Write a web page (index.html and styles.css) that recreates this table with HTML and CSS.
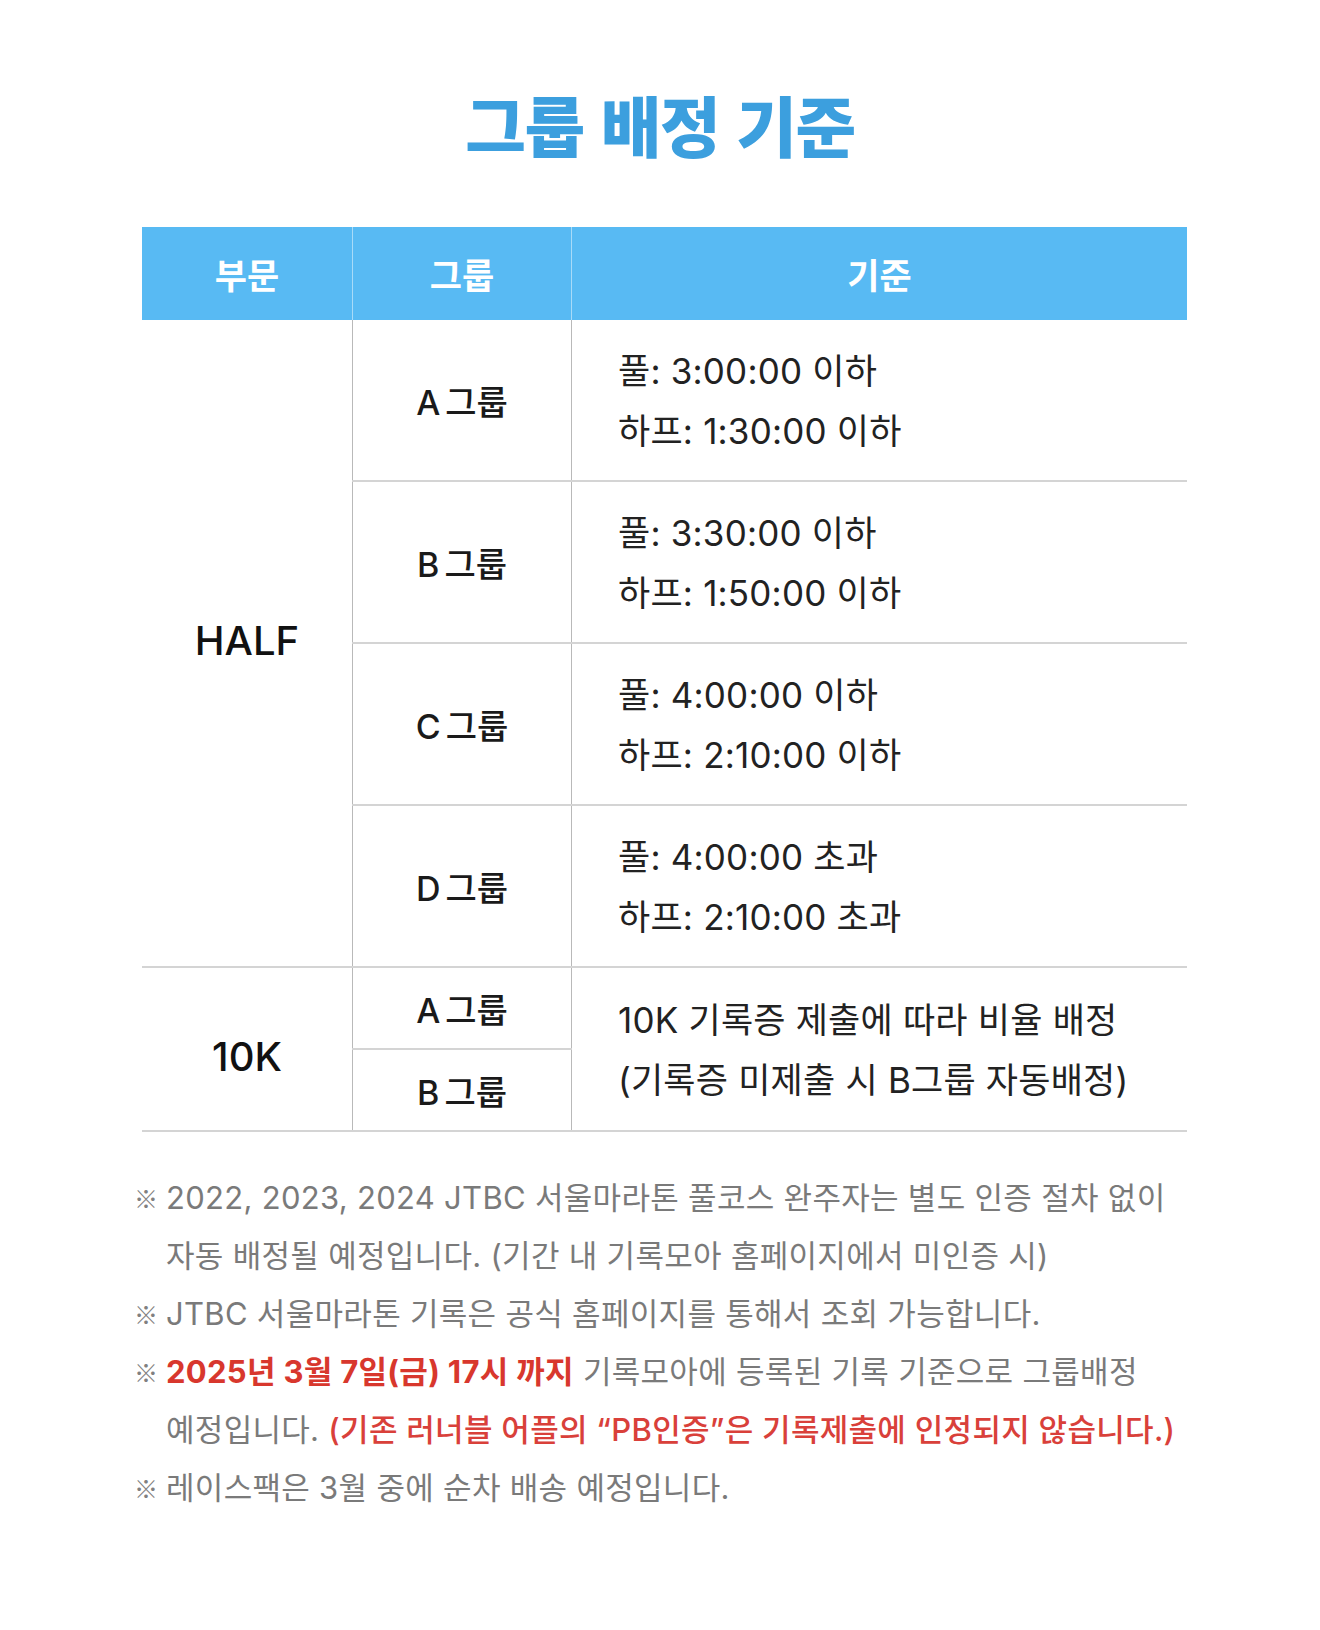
FILE: index.html
```html
<!DOCTYPE html>
<html lang="ko">
<head>
<meta charset="utf-8">
<title>그룹 배정 기준</title>
<link rel="stylesheet" href="styles.css">
</head>
<body>
<main class="page">
  <h1 class="title">그룹 배정 기준</h1>
  <table class="grid">
    <thead>
      <tr>
        <th class="c1">부문</th>
        <th class="c2">그룹</th>
        <th class="c3">기준</th>
      </tr>
    </thead>
    <tbody>
      <tr class="row">
        <td class="div div-half sep" rowspan="4">HALF</td>
        <td class="grp sep">A 그룹</td>
        <td class="crit sep">풀: 3:00:00 이하<br>하프: 1:30:00 이하</td>
      </tr>
      <tr class="row">
        <td class="grp sep">B 그룹</td>
        <td class="crit sep">풀: 3:30:00 이하<br>하프: 1:50:00 이하</td>
      </tr>
      <tr class="row">
        <td class="grp sep">C 그룹</td>
        <td class="crit sep">풀: 4:00:00 이하<br>하프: 2:10:00 이하</td>
      </tr>
      <tr class="row">
        <td class="grp sep">D 그룹</td>
        <td class="crit sep">풀: 4:00:00 초과<br>하프: 2:10:00 초과</td>
      </tr>
      <tr class="half-row">
        <td class="div div-10k sep" rowspan="2">10K</td>
        <td class="grp sep">A 그룹</td>
        <td class="crit sep" rowspan="2">10K 기록증 제출에 따라 비율 배정<br>(기록증 미제출 시 B그룹 자동배정)</td>
      </tr>
      <tr class="half-row">
        <td class="grp sep">B 그룹</td>
      </tr>
    </tbody>
  </table>
  <ul class="notes">
    <li>2022, 2023, 2024 JTBC 서울마라톤 풀코스 완주자는 별도 인증 절차 없이<br>자동 배정될 예정입니다. (기간 내 기록모아 홈페이지에서 미인증 시)</li>
    <li>JTBC 서울마라톤 기록은 공식 홈페이지를 통해서 조회 가능합니다.</li>
    <li><strong class="red-b">2025년 3월 7일(금) 17시 까지</strong> 기록모아에 등록된 기록 기준으로 그룹배정<br>예정입니다. <span class="red">(기존 러너블 어플의 “PB인증”은 기록제출에 인정되지 않습니다.)</span></li>
    <li>레이스팩은 3월 중에 순차 배송 예정입니다.</li>
  </ul>
</main>
</body>
</html>
```

FILE: styles.css
```css
html, body {
  margin: 0;
  padding: 0;
  background: #ffffff;
}

body {
  font-family: "Inter", "Noto Sans CJK KR", sans-serif;
  color: #222222;
}

.page {
  width: 1320px;
  padding-top: 82px;
  padding-bottom: 120px;
}

.title {
  margin: 0;
  text-align: center;
  font-family: "Noto Sans CJK KR", sans-serif;
  font-size: 66px;
  line-height: 82px;
  font-weight: 900;
  color: #3c9fde;
  letter-spacing: -1.5px;
}

.grid {
  margin: 63px 0 0 142px;
  width: 1043px;
  border-collapse: collapse;
  table-layout: fixed;
}

.grid th {
  height: 93px;
  padding: 0;
  background: #58baf3;
  color: #ffffff;
  font-family: "Noto Sans CJK KR", sans-serif;
  font-size: 35px;
  font-weight: 700;
  text-align: center;
  vertical-align: middle;
}

.grid th + th {
  border-left: 1px solid #a8dbf8;
}

.c1 { width: 210px; }
.c2 { width: 218px; }
.c3 { width: 615px; }

.grid td {
  padding: 0;
  vertical-align: middle;
}

.row td.grp { height: 160px; }
.row td.crit { height: 158px; }
.half-row td.grp { height: 80px; }

.sep {
  border-bottom: 2px solid #d4d4d4;
}

.grp, .crit {
  border-left: 1px solid #b9b9b9;
}

.div {
  text-align: center;
  font-size: 40px;
  font-weight: 500;
  color: #111111;
}

.grid td.div-half {
  padding-bottom: 6px;
}

.grid td.div-10k {
  padding-top: 14px;
}

.grp {
  text-align: center;
  font-size: 34px;
  font-weight: 500;
  color: #1a1a1a;
  word-spacing: -4px;
}

.grid td.crit {
  padding: 2px 0 0 46px;
  font-size: 35px;
  line-height: 60px;
  color: #222222;
  letter-spacing: 0.2px;
}

.notes {
  list-style: none;
  margin: 37px 0 0 0;
  padding: 0 0 0 166px;
  width: 1100px;
  font-size: 31px;
  line-height: 58px;
  color: #7a7a7a;
  letter-spacing: 0.3px;
  white-space: nowrap;
}

.notes li {
  position: relative;
}

.notes li::before {
  content: "※";
  position: absolute;
  left: -32px;
  top: 0;
  font-family: "Noto Sans CJK KR", sans-serif;
  font-size: 24px;
  font-weight: 700;
  color: #808080;
}

.red-b {
  color: #d8372d;
  font-weight: 700;
}

.red {
  color: #d9403a;
  font-weight: 500;
}
```
